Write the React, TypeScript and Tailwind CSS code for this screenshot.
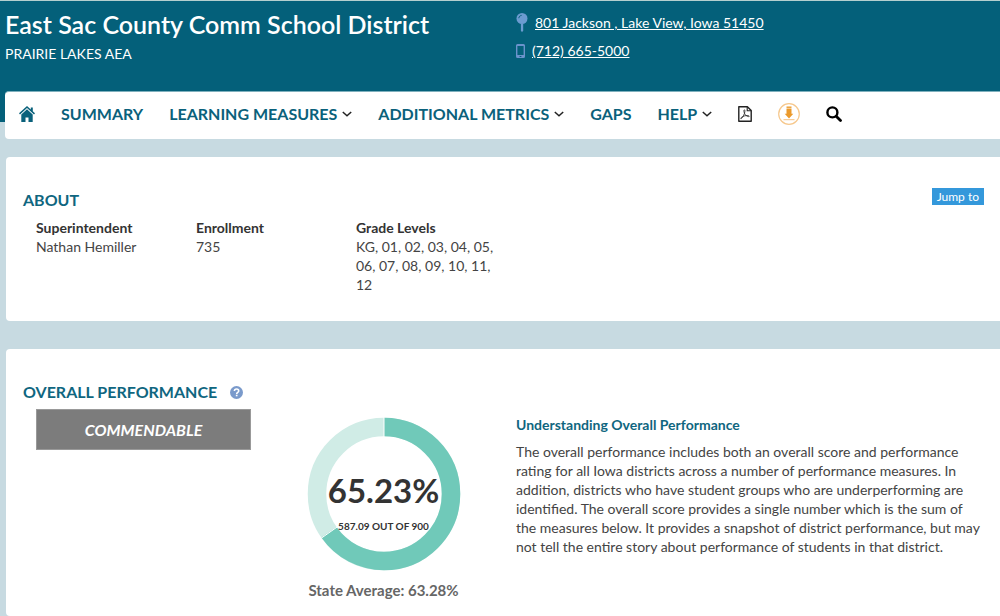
import type { ReactNode } from "react";

const grades = "KG, 01, 02, 03, 04, 05, 06, 07, 08, 09, 10, 11, 12";

const HomeIcon = () => (
    <svg className="h-4 w-4" viewBox="0 0 16 16" fill="currentColor" aria-hidden="true">
        <path d="M8 0 0 7.3l1 1.1L8 2.1l7 6.3 1-1.1-2.2-2V1.6h-2v1.9z" />
        <path d="M8 3.3 2.3 8.4V16h4.2v-4.6h3V16h4.2V8.4z" />
    </svg>
);

const PushpinIcon = () => (
    <svg className="h-5 w-3 shrink-0" viewBox="0 0 12 20" aria-hidden="true">
        <circle cx="6" cy="5.5" r="5.5" fill="#6b9bd0" />
        <path d="M2.8 5.2C3 3.5 4 2.6 5.6 2.4" fill="none" stroke="#04607a" strokeWidth="1" />
        <path d="M4.9 10.5h2.3v7L6 19.2l-1.1-1.7z" fill="#6b9bd0" />
    </svg>
);

const PhoneIcon = () => (
    <svg className="h-[14px] w-[9px] shrink-0" viewBox="0 0 9 14" aria-hidden="true">
        <path
            fillRule="evenodd"
            fill="#6b93cc"
            d="M1.5 0h6A1.5 1.5 0 0 1 9 1.5v11A1.5 1.5 0 0 1 7.5 14h-6A1.5 1.5 0 0 1 0 12.5v-11A1.5 1.5 0 0 1 1.5 0zM1.4 2v9h6.2V2zM3.6 12v1h1.8v-1z"
        />
    </svg>
);

const Chevron = () => (
    <svg className="h-[6px] w-[10px]" viewBox="0 0 10 6" fill="none" aria-hidden="true">
        <path d="M.8 1 5 4.8 9.2 1" stroke="#222" strokeWidth="1.5" />
    </svg>
);

const PdfIcon = () => (
    <svg className="h-4 w-[14px]" viewBox="0 0 14 16" fill="none" stroke="#222" aria-hidden="true">
        <path d="M.8.7h8.6l3.8 3.8v10.8H.8z" strokeWidth="1.4" strokeLinejoin="round" />
        <path d="M9.2.9v3.8h3.9" strokeWidth="1.1" />
        <path
            d="M6.4 3.8c-.9 0-.5 2.3.3 3.9.8 1.7 2.3 2.9 3.8 2.9 1.2 0 1-1-.6-1.1C7.5 9.4 4.6 10.2 3.3 11.5c-1 1.1-.5 1.7.3.9C5 11 6.7 7.6 6.9 5.5c.1-1.1-.1-1.7-.5-1.7z"
            strokeWidth=".8"
        />
    </svg>
);

const DownloadIcon = () => (
    <svg className="h-[22px] w-[22px]" viewBox="0 0 22 22" fill="none" aria-hidden="true">
        <circle cx="11" cy="11" r="10.3" stroke="#f6c88d" strokeWidth="1.2" />
        <path d="M8.5 3.5h5v1.4h-5z" fill="#eb9a2c" />
        <path d="M8.5 5.5h5v5.3h1.8L11 15.4l-4.300-4.600h1.800z" fill="#eb9a2c" />
        <path d="M5.500 16.700h11" stroke="#f4c080" />
    </svg>
);

const SearchIcon = () => (
    <svg className="h-4 w-4" viewBox="0 0 16 16" fill="none" stroke="#000" aria-hidden="true">
        <circle cx="6.4" cy="6.4" r="5" strokeWidth="2.4" />
        <path d="m10.200 10.200 4.300 4.300" strokeWidth="2.8" strokeLinecap="round" />
    </svg>
);

const HelpIcon = () => (
    <svg className="h-[13px] w-[13px]" viewBox="0 0 13 13" fill="none" aria-hidden="true">
        <circle cx="6.5" cy="6.5" r="6.5" fill="#7a9acb" />
        <path d="M4.4 5.1C4.4 3.8 5.3 3 6.6 3s2.1.8 2.1 1.9c0 1.5-2 1.5-2 3" stroke="#fff" strokeWidth="1.6" />
        <path d="M5.8 8.7h1.7v1.6H5.8z" fill="#fff" />
    </svg>
);

const NavMenu = ({ children }: { children: ReactNode }) => (
    <button type="button" className="flex items-center gap-[5px] font-bold">
        {children}
        <Chevron />
    </button>
);

const ScoreDonut = ({ percent }: { percent: number }) => {
    const length = 2 * Math.PI * 67;
    const angle = (percent / 100) * 2 * Math.PI;
    const x = Math.sin(angle);
    const y = -Math.cos(angle);

    return (
        <div className="relative h-[154px] w-[154px]">
            <svg className="h-full w-full" viewBox="-77 -77 154 154" fill="none" aria-hidden="true">
                <circle r="67" stroke="#d0ece6" strokeWidth="18.5" />
                <circle
                    r="67"
                    stroke="#70c9b9"
                    strokeWidth="18.5"
                    strokeDasharray={`${(percent / 100) * length} ${length}`}
                    transform="rotate(-90)"
                />
                <path d={`M0-57V-77M${x * 57} ${y * 57}L${x * 77} ${y * 77}`} stroke="#fff" />
            </svg>
            <div className="absolute inset-0 flex flex-col items-center gap-[10px] pt-[57px] text-[#333]">
                <span className="text-[33px] leading-8 font-bold">{percent}%</span>
                <span className="text-[10px] leading-5 font-bold whitespace-nowrap">587.09 OUT OF 900</span>
            </div>
        </div>
    );
};

const App = () => {
    return (
        <div className="flex min-h-screen flex-col bg-[#c7dae1] font-['Lato','Liberation_Sans',sans-serif] text-sm text-[#444]">
            {/* Header */}
            <header className="grid grid-cols-[516px_1fr] border-t border-[#b5cfcf] bg-[#04607a] pt-[7px] pb-[58px] text-white">
                <div className="pl-[5px]">
                    <h1 className="text-[25px] leading-8 font-semibold">East Sac County Comm School District</h1>
                    <p className="mt-1 leading-5">PRAIRIE LAKES AEA</p>
                </div>
                <address className="flex flex-col gap-2 pt-[5px] not-italic">
                    <div className="flex h-5 items-center gap-[7px]">
                        <PushpinIcon />
                        <a href="#map" className="underline">801 Jackson , Lake View, Iowa 51450</a>
                    </div>
                    <div className="flex h-5 items-center gap-[7px]">
                        <PhoneIcon />
                        <a href="tel:7126655000" className="underline">(712) 665-5000</a>
                    </div>
                </address>
            </header>

            <main className="flex flex-1 flex-col pl-[6px]">
                {/* Navigation */}
                <nav className="-mt-[31px] -ml-px flex h-12 items-center gap-[26px] rounded-l border-t border-[#7fb0bd] bg-white pr-4 pb-1 pl-[14px] text-base font-bold whitespace-nowrap text-[#0a617b]">
                    <a href="#home" aria-label="Home"><HomeIcon /></a>
                    <a href="#summary">SUMMARY</a>
                    <NavMenu>LEARNING MEASURES</NavMenu>
                    <NavMenu>ADDITIONAL METRICS</NavMenu>
                    <a href="#gaps">GAPS</a>
                    <NavMenu>HELP</NavMenu>
                    <a href="#pdf" aria-label="PDF"><PdfIcon /></a>
                    <a href="#download" aria-label="Download"><DownloadIcon /></a>
                    <button type="button" aria-label="Search"><SearchIcon /></button>
                </nav>

                {/* About */}
                <section className="mt-[18px] flex items-start justify-between rounded-l bg-white pt-[31px] pr-4 pb-[27px] pl-[17px]">
                    <div>
                        <h2 className="text-base leading-6 font-bold text-[#0f6680]">ABOUT</h2>
                        <dl className="mt-[6px] ml-[13px] grid grid-cols-[160px_160px_140px] leading-[19px]">
                            <div>
                                <dt className="font-bold text-[#333]">Superintendent</dt>
                                <dd>Nathan Hemiller</dd>
                            </div>
                            <div>
                                <dt className="font-bold text-[#333]">Enrollment</dt>
                                <dd>735</dd>
                            </div>
                            <div>
                                <dt className="font-bold text-[#333]">Grade Levels</dt>
                                <dd>{grades}</dd>
                            </div>
                        </dl>
                    </div>
                    <button type="button" className="h-[17px] bg-[#3498db] px-[5px] text-xs leading-4 text-white">
                        Jump to
                    </button>
                </section>

                {/* Overall performance */}
                <section className="mt-7 flex-1 rounded-l bg-white pt-[31px] pl-[17px]">
                    <div className="flex items-center gap-[13px]">
                        <h2 className="text-base leading-6 font-bold text-[#0f6680]">OVERALL PERFORMANCE</h2>
                        <button type="button" aria-label="Help"><HelpIcon /></button>
                    </div>
                    <div className="ml-[13px] grid grid-cols-[215px_265px_1fr] items-start pt-[5px] pr-4">
                        <div className="border border-[#999] bg-[#7c7c7c] text-center text-base leading-[39px] font-bold text-white italic">
                            COMMENDABLE
                        </div>
                        <div className="flex flex-col items-center pt-2">
                            <ScoreDonut percent={65.23} />
                            <p className="mt-[9px] text-[15px] leading-5 font-bold text-[#666]">State Average: 63.28%</p>
                        </div>
                        <div className="pt-[6px]">
                            <h3 className="leading-[19px] font-bold text-[#0f6680]">Understanding Overall Performance</h3>
                            <p className="mt-2 leading-[19px]">
                                The overall performance includes both an overall score and performance rating for all
                                Iowa districts across a number of performance measures. In addition, districts who have
                                student groups who are underperforming are identified. The overall score provides a
                                single number which is the sum of the measures below. It provides a snapshot of district
                                performance, but may not tell the entire story about performance of students in that
                                district.
                            </p>
                        </div>
                    </div>
                </section>
            </main>
        </div>
    );
};

export default App;
